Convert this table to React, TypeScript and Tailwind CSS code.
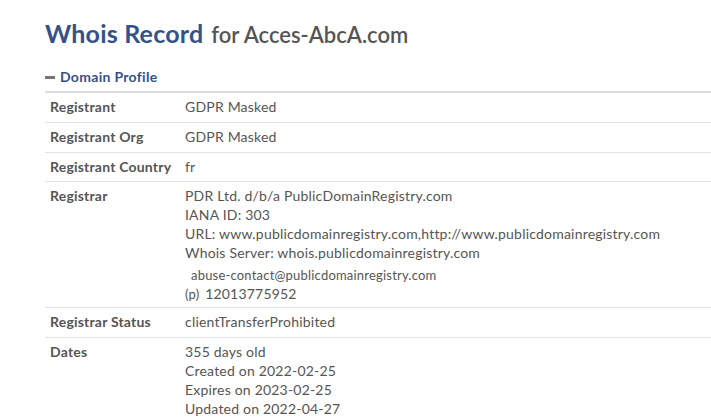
import React from "react";

type Row = { label: string; lines: React.ReactNode };

const rows: Row[] = [
  { label: "Registrant", lines: "GDPR Masked" },
  { label: "Registrant Org", lines: "GDPR Masked" },
  { label: "Registrant Country", lines: "fr" },
  {
    label: "Registrar",
    lines: (
      <>
        <div>PDR Ltd. d/b/a PublicDomainRegistry.com</div>
        <div>IANA ID: 303</div>
        <div>URL: www.publicdomainregistry.com,http://www.publicdomainregistry.com</div>
        <div>Whois Server: whois.publicdomainregistry.com</div>
        <div className="mt-[3px] pl-[6px] text-[13px]">abuse-contact@publicdomainregistry.com</div>
        <div className="leading-[20px] -mb-[2px]">
          <span className="text-[13px] mr-[2px]">(p)</span> 12013775952
        </div>
      </>
    ),
  },
  { label: "Registrar Status", lines: "clientTransferProhibited" },
  {
    label: "Dates",
    lines: (
      <>
        <div>355 days old</div>
        <div>Created on 2022-02-25</div>
        <div>Expires on 2023-02-25</div>
        <div>Updated on 2022-04-27</div>
      </>
    ),
  },
];

export default function App() {
  return (
    <div
      className="w-[711px] h-[420px] overflow-hidden bg-white pl-[45px] text-[#555]"
      style={{ fontFamily: "Lato, 'Open Sans', sans-serif" }}
    >
      {/* Titre */}
      <h1 className="pt-[17px] leading-[32px] whitespace-nowrap">
        <span className="text-[25px] font-bold tracking-[0.2px] text-[#34528a]">Whois Record</span>
        <span className="ml-[8px] text-[22px] font-semibold text-[#555]">for Acces-AbcA.com</span>
      </h1>

      {/* Section */}
      <div className="mt-[16px] flex items-center gap-[5px] pb-[6px]">
        <span className="w-[10px] h-[3px] bg-[#777]" />
        <span className="text-[14px] tracking-[0.3px] font-bold text-[#34528a] leading-[16px]">Domain Profile</span>
      </div>

      <div className="border-t-2 border-[#dcdcdc]">
        {rows.map((r) => (
          <div
            key={r.label}
            className="flex border-b border-[#e3e3e3] py-[5px] text-[14px] tracking-[0.2px] leading-[18.8px]"
          >
            <div className="w-[140px] shrink-0 pl-[5px] font-bold">{r.label}</div>
            <div className="whitespace-nowrap">{r.lines}</div>
          </div>
        ))}
      </div>
    </div>
  );
}
